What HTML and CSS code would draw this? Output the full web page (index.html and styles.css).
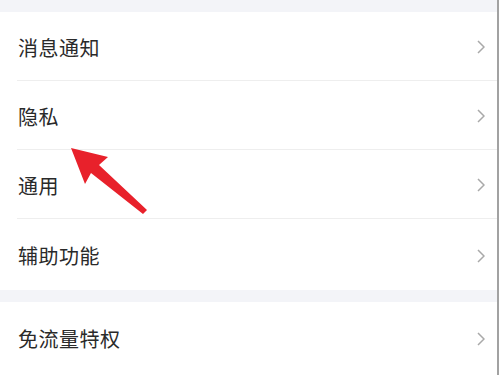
FILE: index.html
```html
<!DOCTYPE html>
<html lang="zh">
<head>
<meta charset="utf-8">
<link rel="stylesheet" href="styles.css">
</head>
<body>
<div class="screen">
  <div class="band"></div>
  <div class="group">
    <div class="row"><span class="label">消息通知</span><svg class="chev" viewBox="0 0 8 14"><path d="M1 1 L7 7 L1 13"/></svg></div>
    <div class="row"><span class="label">隐私</span><svg class="chev" viewBox="0 0 8 14"><path d="M1 1 L7 7 L1 13"/></svg></div>
    <div class="row"><span class="label">通用</span><svg class="chev" viewBox="0 0 8 14"><path d="M1 1 L7 7 L1 13"/></svg></div>
    <div class="row last"><span class="label">辅助功能</span><svg class="chev" viewBox="0 0 8 14"><path d="M1 1 L7 7 L1 13"/></svg></div>
  </div>
  <div class="band"></div>
  <div class="group">
    <div class="row last"><span class="label">免流量特权</span><svg class="chev" viewBox="0 0 8 14"><path d="M1 1 L7 7 L1 13"/></svg></div>
  </div>
  <svg class="arrow" viewBox="0 0 500 375" width="500" height="375">
    <polygon points="71,148 108,157 99,165 147,210 143,214 91,173 85,184" fill="#e8212b"/>
  </svg>
</div>
</body>
</html>
```
FILE: styles.css
```css
html, body {
  margin: 0;
  padding: 0;
  background: #ffffff;
}
body {
  width: 500px;
  height: 375px;
  overflow: hidden;
  font-family: "Noto Sans CJK SC", "Noto Sans", sans-serif;
}
.screen {
  position: relative;
  width: 497px;
  height: 375px;
  border-right: 2px solid #a2a2a2;
  background: #ffffff;
}
.band {
  height: 12px;
  background: #f3f4f8;
}
.group {
  display: flex;
  flex-direction: column;
}
.row {
  display: flex;
  align-items: center;
  justify-content: space-between;
  height: 66px;
  padding-top: 2px;
  margin-left: 17px;
  padding-right: 12px;
  border-bottom: 1px solid #eeeeee;
}
.row.last {
  border-bottom: none;
  height: 69px;
}
.label {
  font-size: 20px;
  color: #2a2a2a;
  letter-spacing: 0.5px;
  margin-left: 1px;
}
.chev {
  width: 8px;
  height: 14px;
  fill: none;
  stroke: #a9a9a9;
  stroke-width: 1.5;
}
.arrow {
  position: absolute;
  left: 0;
  top: 0;
  pointer-events: none;
}
```
